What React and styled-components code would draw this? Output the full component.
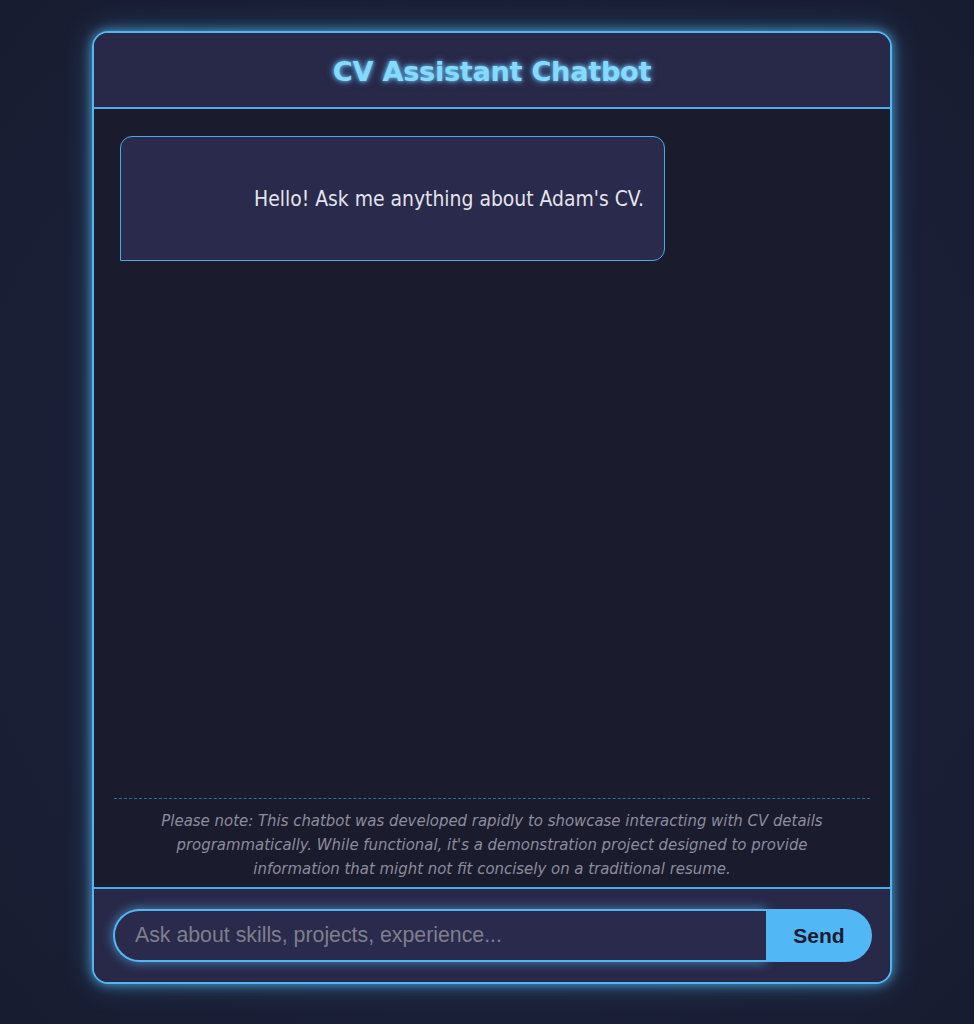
import styled, { createGlobalStyle } from "styled-components";

const GlobalStyle = createGlobalStyle`
  html, body {
    margin: 0;
    padding: 0;
    background: #1a1f36;
  }
  body {
    font-family: "DejaVu Sans Condensed", "DejaVu Sans", sans-serif;
  }
`;

const Page = styled.div`
  min-height: 1024px;
  display: flex;
  justify-content: center;
  padding: 31px 0 0 10px;
  box-sizing: border-box;
  background: radial-gradient(ellipse at center, #1c2038 0%, #1a1f36 70%, #181c30 100%);
`;

const Card = styled.div`
  width: 800px;
  height: 953px;
  box-sizing: border-box;
  border: 2px solid #52b6f2;
  border-radius: 16px;
  background: #1b1b2e;
  box-shadow: 0 0 12px rgba(82, 182, 242, 0.85), 0 0 30px rgba(82, 182, 242, 0.3);
  display: flex;
  flex-direction: column;
  overflow: hidden;
`;

const Header = styled.header`
  height: 74px;
  flex-shrink: 0;
  background: #282848;
  border-bottom: 2px solid #4aaee8;
  display: flex;
  align-items: center;
  justify-content: center;
`;

const Title = styled.h1`
  margin: 0;
  font-family: "DejaVu Sans", Verdana, sans-serif;
  font-weight: bold;
  font-size: 27.2px;
  letter-spacing: -0.3px;
  color: #84daff;
  text-shadow: 0 0 4px rgba(120, 210, 255, 0.95), 0 0 8px rgba(100, 195, 255, 0.6);
  padding-top: 2px;
`;

const Messages = styled.div`
  flex: 1;
  padding: 27px 20px 0 26px;
  display: flex;
  flex-direction: column;
  align-items: flex-start;
`;

const Bubble = styled.div`
  width: 545px;
  height: 125px;
  box-sizing: border-box;
  background: #2a2a4c;
  border: 1px solid #4ea8e4;
  border-radius: 12px 12px 12px 0;
  display: flex;
  align-items: center;
  justify-content: flex-end;
  padding: 0 20px;
  color: #e4e4ec;
  font-size: 20.9px;
`;

const Note = styled.p`
  margin: 0 20px;
  padding: 10px 40px 6px;
  border-top: 1px dashed #2f6d9c;
  text-align: center;
  font-style: italic;
  font-size: 16.6px;
  line-height: 24px;
  color: #8c8c9c;
`;

const InputBar = styled.div`
  flex-shrink: 0;
  height: 95px;
  box-sizing: border-box;
  background: #282848;
  border-top: 2px solid #4aaee8;
  padding: 20px 18px 0 19px;
  display: flex;
`;

const Field = styled.input`
  flex: 1;
  height: 53px;
  box-sizing: border-box;
  background: #2a2a4c;
  border: 2px solid #52b6f2;
  border-right: none;
  border-radius: 27px 0 0 27px;
  box-shadow: 0 0 12px rgba(82, 182, 242, 0.7);
  padding: 0 20px;
  font-family: "Liberation Sans", Arial, sans-serif;
  font-size: 21.3px;
  color: #e0e0e0;
  outline: none;

  &::placeholder {
    color: #7f7f8c;
  }
`;

const SendButton = styled.button`
  width: 106px;
  height: 53px;
  border: none;
  border-radius: 0 27px 27px 0;
  background: #52b8f5;
  font-family: "Liberation Sans", Arial, sans-serif;
  font-weight: bold;
  font-size: 21px;
  color: #1a1a30;
  cursor: pointer;
`;

export default function App() {
  return (
    <>
      <GlobalStyle />
      <Page>
        <Card>
          <Header>
            <Title>CV Assistant Chatbot</Title>
          </Header>
          <Messages>
            <Bubble>Hello! Ask me anything about Adam's CV.</Bubble>
          </Messages>
          <Note>
            Please note: This chatbot was developed rapidly to showcase interacting with CV details
            programmatically. While functional, it's a demonstration project designed to provide
            information that might not fit concisely on a traditional resume.
          </Note>
          <InputBar>
            <Field placeholder="Ask about skills, projects, experience..." />
            <SendButton>Send</SendButton>
          </InputBar>
        </Card>
      </Page>
    </>
  );
}
